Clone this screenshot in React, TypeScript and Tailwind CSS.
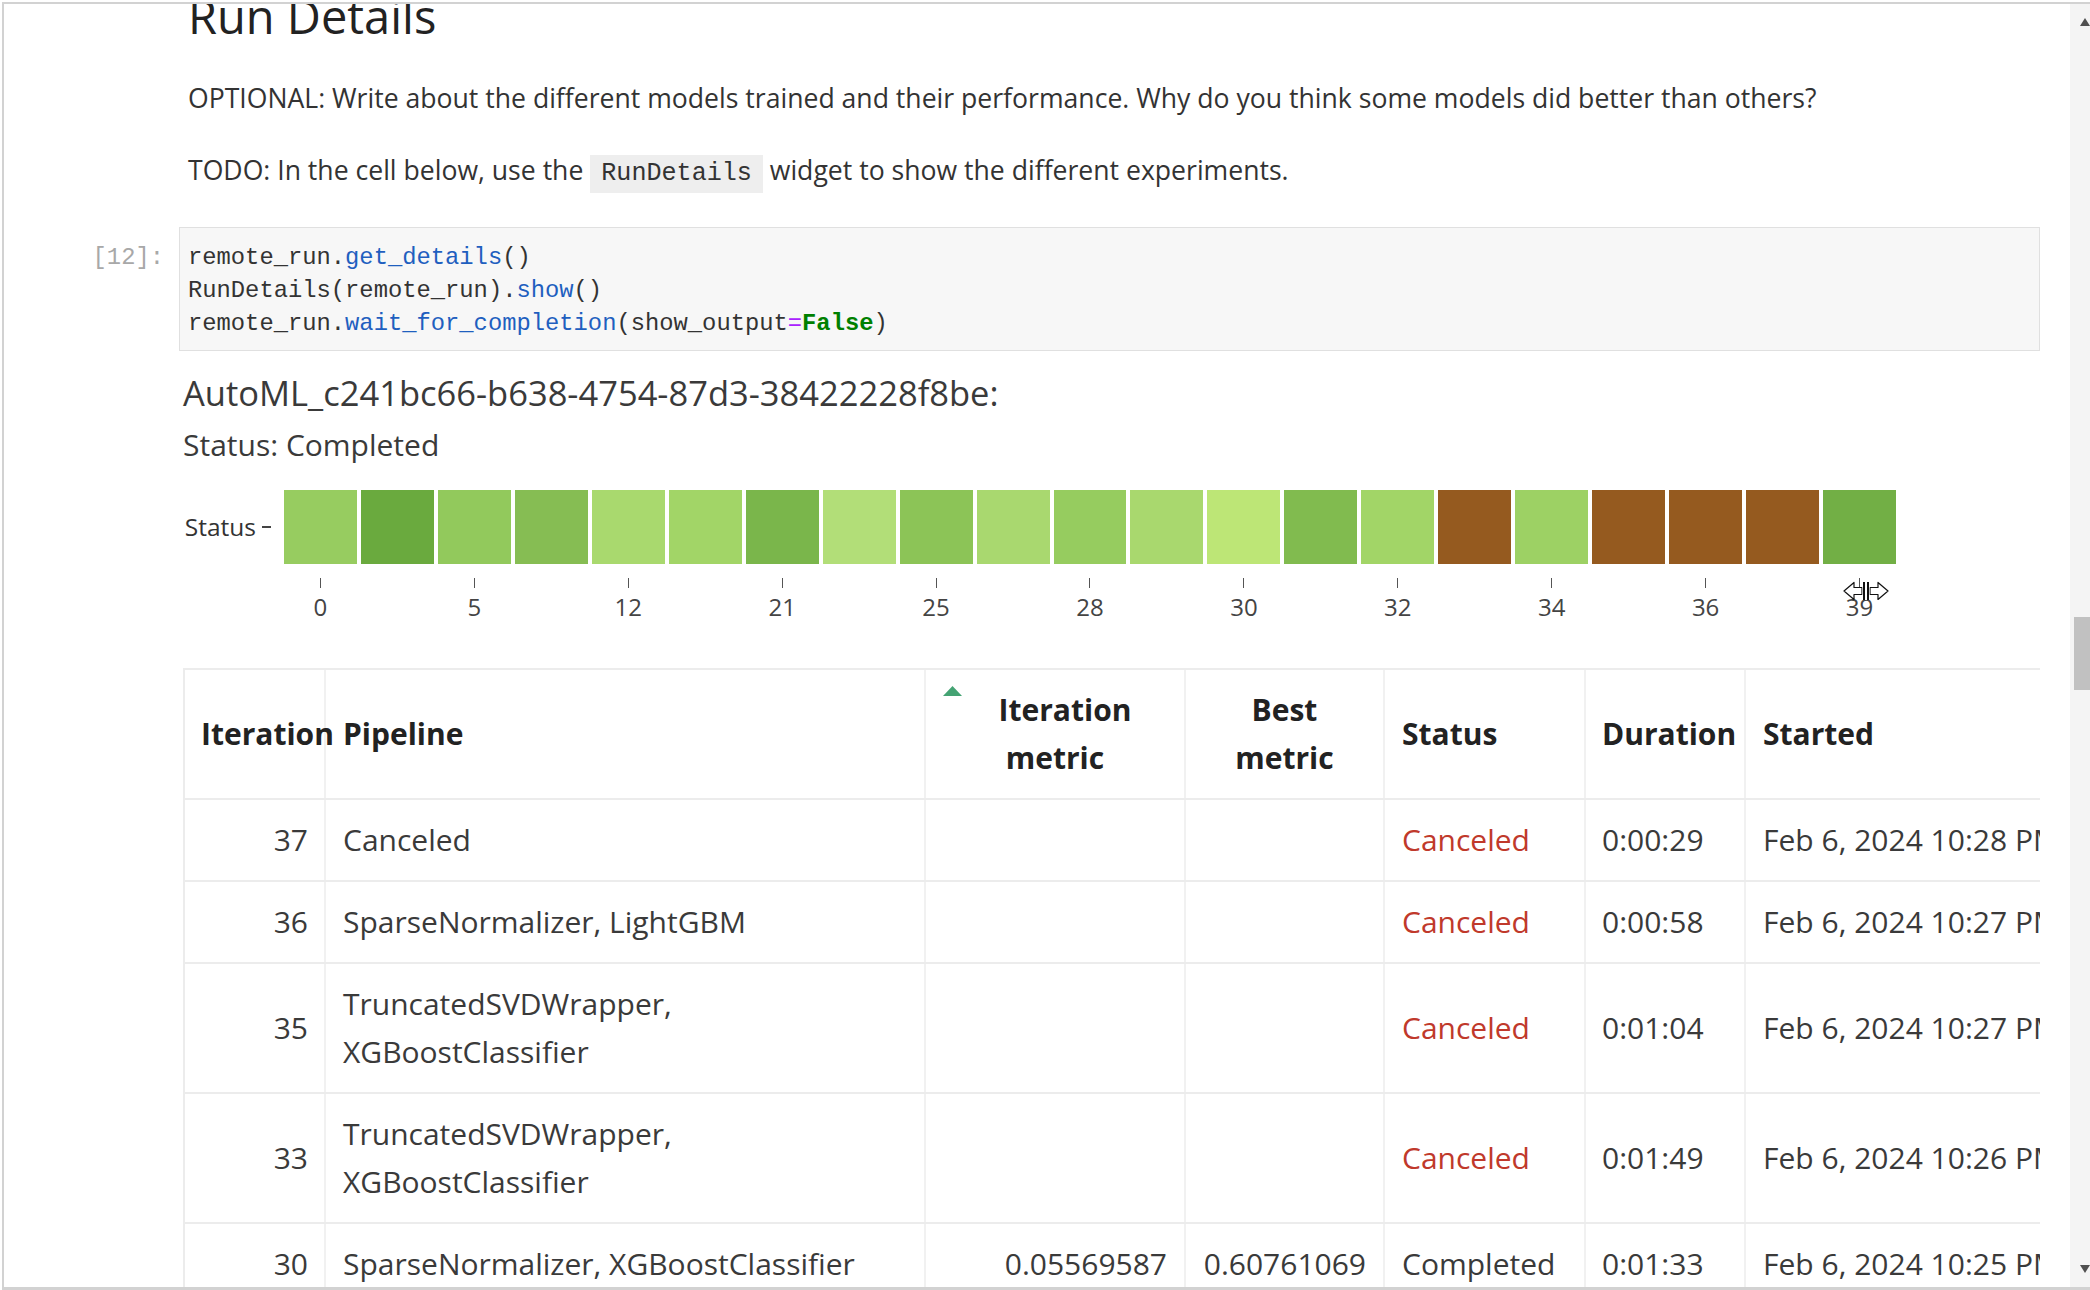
import React from 'react';

const cellColors = [
  '#97cc60', '#6aaa3e', '#92c95c', '#86bd53', '#a9d96e', '#a2d567', '#7ab64b',
  '#b2de78', '#8cc457', '#a9d86f', '#96cc5f', '#a9d86e', '#bde676', '#81bb4f',
  '#a2d567', '#955a1f', '#9dd164', '#955a1f', '#955a1f', '#955a1f', '#72af45',
];

const ticks = ['0', '5', '12', '21', '25', '28', '30', '32', '34', '36', '39'];

type Row = {
  it: string;
  pipe: string[];
  im: string;
  bm: string;
  status: string;
  dur: string;
  start: string;
  tall: boolean;
};

const rows: Row[] = [
  { it: '37', pipe: ['Canceled'], im: '', bm: '', status: 'Canceled', dur: '0:00:29', start: 'Feb 6, 2024 10:28 PM', tall: false },
  { it: '36', pipe: ['SparseNormalizer, LightGBM'], im: '', bm: '', status: 'Canceled', dur: '0:00:58', start: 'Feb 6, 2024 10:27 PM', tall: false },
  { it: '35', pipe: ['TruncatedSVDWrapper,', 'XGBoostClassifier'], im: '', bm: '', status: 'Canceled', dur: '0:01:04', start: 'Feb 6, 2024 10:27 PM', tall: true },
  { it: '33', pipe: ['TruncatedSVDWrapper,', 'XGBoostClassifier'], im: '', bm: '', status: 'Canceled', dur: '0:01:49', start: 'Feb 6, 2024 10:26 PM', tall: true },
  { it: '30', pipe: ['SparseNormalizer, XGBoostClassifier'], im: '0.05569587', bm: '0.60761069', status: 'Completed', dur: '0:01:33', start: 'Feb 6, 2024 10:25 PM', tall: false },
];

const GRID = 'grid grid-cols-[141px_600px_260px_199px_201px_160px_330px]';
const CELL = 'h-full flex items-center border-r-2 border-[#f1f1f1] whitespace-nowrap';

function Scrollbar() {
  return (
    <div className="w-[20px] shrink-0 bg-[#f4f4f4] flex flex-col">
      <svg className="mt-[14px] ml-[10px] shrink-0" width="10" height="8" viewBox="0 0 10 8">
        <polygon points="5,0 10,8 0,8" fill="#505050" />
      </svg>
      <div className="mt-[591px] ml-[4px] w-[16px] h-[73px] bg-[#c1c1c1] shrink-0" />
      <div className="flex-1" />
      <svg className="mb-[14px] ml-[10px] shrink-0" width="10" height="8" viewBox="0 0 10 8">
        <polygon points="0,0 10,0 5,8" fill="#505050" />
      </svg>
    </div>
  );
}

function Cursor() {
  return (
    <svg className="absolute left-[1843px] top-[581px]" width="46" height="20" viewBox="0 0 46 20">
      <polygon points="1,10 11,1.5 11,6.5 19,6.5 19,13.5 11,13.5 11,18.5" fill="#fff" stroke="#111" strokeWidth="1.2" strokeLinejoin="round" />
      <polygon points="45,10 35,1.5 35,6.5 27,6.5 27,13.5 35,13.5 35,18.5" fill="#fff" stroke="#111" strokeWidth="1.2" strokeLinejoin="round" />
      <rect x="19.5" y="1" width="7" height="18" fill="#fff" />
      <rect x="20" y="1" width="2" height="18" fill="#111" />
      <rect x="24" y="1" width="2" height="18" fill="#111" />
    </svg>
  );
}

function Table() {
  return (
    <div className="mt-[46px] w-[1857px] overflow-hidden border-t-2 border-l-2 border-[#ececec] text-[30px] leading-[48px]">
      <div className={`${GRID} h-[130px] border-b-2 border-[#ececec] font-bold text-[#222]`}>
        <div className={`${CELL} pl-[16px]`}>Iteration</div>
        <div className={`${CELL} pl-[17px]`}>Pipeline</div>
        <div className={`${CELL} relative flex-col justify-center`}>
          <svg className="absolute left-[17px] top-[16px]" width="19" height="10" viewBox="0 0 19 10">
            <polygon points="9.5,0 19,10 0,10" fill="#44a373" />
          </svg>
          <span className="ml-[20px]">Iteration</span>
          <span>metric</span>
        </div>
        <div className={`${CELL} flex-col justify-center`}>
          <span>Best</span>
          <span>metric</span>
        </div>
        <div className={`${CELL} pl-[17px]`}>Status</div>
        <div className={`${CELL} pl-[16px]`}>Duration</div>
        <div className={`${CELL} pl-[17px]`}>Started</div>
      </div>
      {rows.map((r) => (
        <div key={r.it} className={`${GRID} ${r.tall ? 'h-[130px]' : 'h-[82px]'} border-b-2 border-[#ececec] text-[#3a3a3a]`}>
          <div className={`${CELL} justify-end pr-[16px]`}>{r.it}</div>
          <div className={`${CELL} flex-col items-start justify-center pl-[17px]`}>
            {r.pipe.map((p) => (
              <span key={p}>{p}</span>
            ))}
          </div>
          <div className={`${CELL} justify-end pr-[17px]`}>{r.im}</div>
          <div className={`${CELL} justify-end pr-[17px]`}>{r.bm}</div>
          <div className={`${CELL} pl-[17px] ${r.status === 'Canceled' ? 'text-[#c0392b]' : ''}`}>{r.status}</div>
          <div className={`${CELL} pl-[16px]`}>{r.dur}</div>
          <div className={`${CELL} pl-[17px]`}>{r.start}</div>
        </div>
      ))}
    </div>
  );
}

export default function App() {
  return (
    <div className="relative w-[2090px] h-[1290px] overflow-hidden bg-white pt-[2px] pl-[2px] font-['Open_Sans',sans-serif] text-[#333]">
      <div className="flex h-[1288px] border-t-2 border-l-2 border-b-[3px] border-[#d2d2d2]">
        <div className="flex-1 min-w-0 overflow-hidden flex flex-col">
          <div className="pl-[184px] shrink-0">
            <h2 className="mt-[-12px] h-[48px] leading-[48px] text-[47px] font-normal text-[#222] whitespace-nowrap">Run Details</h2>
            <p className="mt-[38px] leading-[40px] text-[26.6px] whitespace-nowrap">
              OPTIONAL: Write about the different models trained and their performance. Why do you think some models did better than others?
            </p>
            <p className="mt-[32px] leading-[40px] text-[26.6px] whitespace-nowrap">
              TODO: In the cell below, use the{' '}
              <code className="inline-block px-[11px] leading-[38px] bg-[#eeeeee] font-['Liberation_Mono',monospace] text-[25.1px] text-[#333]">RunDetails</code>{' '}
              widget to show the different experiments.
            </p>
          </div>

          <div className="mt-[34px] flex shrink-0">
            <div className="w-[175px] shrink-0 pr-[15px] pt-[14px] text-right font-['Liberation_Mono',monospace] text-[23.8px] leading-[33px] text-[#a8a8a8]">
              [12]:
            </div>
            <div className="w-[1861px] shrink-0 border border-[#e0e0e0] bg-[#f7f7f7] pl-[8px] pt-[13px] pb-[10px] font-['Liberation_Mono',monospace] text-[23.8px] leading-[33px] text-[#333] whitespace-pre">
              <div>
                remote_run.<span className="text-[#1f5fbf]">get_details</span>()
              </div>
              <div>
                RunDetails(remote_run).<span className="text-[#1f5fbf]">show</span>()
              </div>
              <div>
                remote_run.<span className="text-[#1f5fbf]">wait_for_completion</span>(show_output<span className="text-[#aa22ff]">=</span>
                <span className="font-bold text-[#008000]">False</span>)
              </div>
            </div>
          </div>

          <div className="mt-[20px] pl-[179px] flex flex-col shrink-0">
            <div className="h-[44px] leading-[44px] text-[34.5px] text-[#3a3a3a] whitespace-nowrap">AutoML_c241bc66-b638-4754-87d3-38422228f8be:</div>
            <div className="mt-[10px] h-[40px] leading-[40px] text-[30px] text-[#3a3a3a] whitespace-nowrap">Status: Completed</div>

            <div className="mt-[25px] flex">
              <div className="w-[101px] shrink-0 flex items-center justify-end text-[24.5px] text-[#333]">
                <span>Status</span>
                <span className="ml-[6px] mr-[13px] w-[9px] h-[2px] bg-[#444]" />
              </div>
              <div className="w-[1612px] h-[74px] grid grid-cols-[repeat(21,minmax(0,1fr))] gap-x-[4px]">
                {cellColors.map((c, i) => (
                  <div key={i} className="h-full" style={{ backgroundColor: c }} />
                ))}
              </div>
            </div>

            <div className="mt-[14px] flex">
              <div className="w-[101px] shrink-0" />
              <div className="w-[1612px] grid grid-cols-[repeat(21,minmax(0,1fr))] gap-x-[4px]">
                {cellColors.map((_, i) => (
                  <div key={i} className="flex flex-col items-center">
                    {i % 2 === 0 ? (
                      <>
                        <div className="w-px h-[10px] bg-[#555]" />
                        <div className="mt-[4px] leading-[30px] text-[24px] text-[#444]">{ticks[i / 2]}</div>
                      </>
                    ) : null}
                  </div>
                ))}
              </div>
            </div>

            <Table />
          </div>
        </div>
        <Scrollbar />
      </div>
      <Cursor />
    </div>
  );
}
